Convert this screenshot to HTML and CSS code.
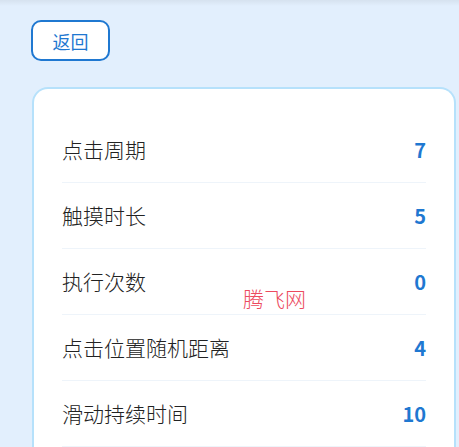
FILE: index.html
```html
<!DOCTYPE html>
<html lang="zh-CN">
<head>
    <meta charset="UTF-8">
    <meta name="viewport" content="width=device-width, initial-scale=1.0">
    <title>参数</title>
    <link rel="stylesheet" href="styles.css">
</head>
<body>
    <div class="page">
        <button class="back-button">返回</button>

        <div class="card">
            <div class="row">
                <span class="label">点击周期</span>
                <span class="value">7</span>
            </div>
            <div class="row">
                <span class="label">触摸时长</span>
                <span class="value">5</span>
            </div>
            <div class="row">
                <span class="label">执行次数</span>
                <span class="value">0</span>
            </div>
            <div class="row">
                <span class="label">点击位置随机距离</span>
                <span class="value">4</span>
            </div>
            <div class="row">
                <span class="label">滑动持续时间</span>
                <span class="value">10</span>
            </div>
        </div>
    </div>

    <div class="watermark">腾飞网</div>
</body>
</html>
```

FILE: styles.css
```css
/* Reset et variables */
:root {
    --primary-color: #1f78d1;
    --background-color: #e2effd;
    --card-border: #b6e1fb;
    --text-color: #222222;
    --divider-color: #eef4fa;
}

* {
    margin: 0;
    padding: 0;
    box-sizing: border-box;
}

html, body {
    height: 100%;
}

body {
    font-family: "Noto Sans CJK SC", "Noto Sans", sans-serif;
    background-color: var(--background-color);
    color: var(--text-color);
    overflow: hidden;
}

.page {
    height: 100%;
    padding: 20px 3px 0 31px;
    background: linear-gradient(to bottom, #d6e2ef 0, var(--background-color) 6px);
}

/* Back button */
.back-button {
    display: block;
    width: 79px;
    height: 41px;
    border: 2px solid var(--primary-color);
    border-radius: 10px;
    background-color: #ffffff;
    color: var(--primary-color);
    font-family: inherit;
    font-size: 18px;
    cursor: pointer;
}

/* Card */
.card {
    margin-top: 26px;
    margin-left: 1px;
    height: 380px;
    padding: 28px 28px 0 28px;
    background-color: #ffffff;
    border: 2px solid var(--card-border);
    border-bottom: none;
    border-radius: 16px 16px 0 0;
}

.row {
    display: flex;
    justify-content: space-between;
    align-items: center;
    height: 66px;
    border-bottom: 1px solid var(--divider-color);
}

.label {
    font-size: 21px;
    font-weight: 300;
    line-height: 1;
}

.value {
    font-size: 20px;
    font-weight: 700;
    color: var(--primary-color);
}

/* Watermark */
.watermark {
    position: absolute;
    left: 243px;
    top: 283px;
    font-size: 21px;
    font-weight: 300;
    color: #ec4a5e;
}
```
